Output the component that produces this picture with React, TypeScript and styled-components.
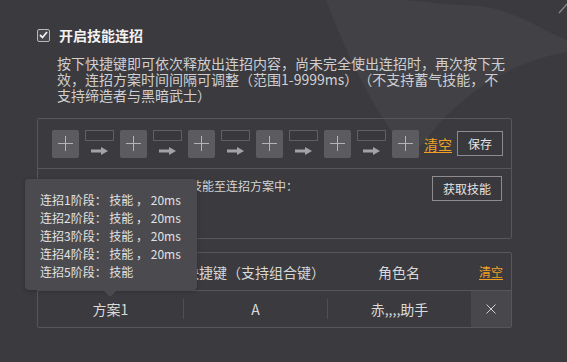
import styled, { createGlobalStyle } from "styled-components";

const GlobalStyle = createGlobalStyle`
  html, body {
    margin: 0;
    padding: 0;
    background: #3b3a3e;
  }
  * {
    box-sizing: border-box;
  }
`;

const STEPS = [1, 2, 3, 4, 5];
const TIPS = [
  "连招1阶段： 技能 ， 20ms",
  "连招2阶段： 技能 ， 20ms",
  "连招3阶段： 技能 ， 20ms",
  "连招4阶段： 技能 ， 20ms",
  "连招5阶段： 技能",
];

const PlusIcon = () => (
  <svg width="15" height="15" viewBox="0 0 15 15">
    <path d="M7.5 0 V15 M0 7.5 H15" stroke="#b4b3b7" strokeWidth="1" />
  </svg>
);

const ArrowIcon = () => (
  <svg width="17" height="8" viewBox="0 0 17 8">
    <path d="M0 2.5 H10 V0 L17 4 L10 8 V5.5 H0 Z" fill="#a3a2a6" />
  </svg>
);

const CloseIcon = () => (
  <svg width="10" height="10" viewBox="0 0 10 10">
    <path d="M0.5 0.5 L9.5 9.5 M9.5 0.5 L0.5 9.5" stroke="#d0d0d0" strokeWidth="1" />
  </svg>
);

const App = () => {
  return (
    <Page>
      <GlobalStyle />
      <Backdrop width="567" height="362" viewBox="0 0 567 362">
        <path
          d="M326 0 C345 50, 368 100, 398 140 C410 152, 420 150, 430 135 C460 95, 510 62, 567 52 L567 40 C540 30, 510 5, 465 5 C440 5, 420 0, 400 0 Z"
          fill="#424145"
        />
        <path d="M559 13 L567 4" stroke="#8a898d" strokeWidth="1.2" />
      </Backdrop>

      <CheckRow>
        <CheckBox>
          <svg width="9" height="8" viewBox="0 0 9 8">
            <path d="M1 4 L3.5 6.5 L8 1" stroke="#f0f0f0" strokeWidth="1.8" fill="none" />
          </svg>
        </CheckBox>
        <Title>开启技能连招</Title>
      </CheckRow>

      <Desc>
        按下快捷键即可依次释放出连招内容，尚未完全使出连招时，再次按下无
        <br />
        效，连招方案时间间隔可调整（范围1-9999ms）（不支持蓄气技能，不
        <br />
        支持缔造者与黑暗武士）
      </Desc>

      <ComboPanel>
        <SkillRow>
          <PlusBox>
            <PlusIcon />
          </PlusBox>
          {STEPS.map((n) => (
            <StepGroup key={n}>
              <Connector>
                <DelayInput />
                <ArrowWrap>
                  <ArrowIcon />
                </ArrowWrap>
              </Connector>
              <PlusBox>
                <PlusIcon />
              </PlusBox>
            </StepGroup>
          ))}
          <ClearLink $size={14}>清空</ClearLink>
          <GhostButton $width={46}>保存</GhostButton>
        </SkillRow>
        <FetchRow>
          <Hint>点击获取技能按钮，添加技能至连招方案中：</Hint>
          <GhostButton $width={70}>获取技能</GhostButton>
        </FetchRow>
      </ComboPanel>

      <TablePanel>
        <HeadRow>
          <HeadCell>方案名</HeadCell>
          <HeadCell>快捷键（支持组合键）</HeadCell>
          <HeadCell>角色名</HeadCell>
          <HeadCell>
            <ClearLink $size={12}>清空</ClearLink>
          </HeadCell>
        </HeadRow>
        <DataRow>
          <DataCell>方案1</DataCell>
          <Divider />
          <DataCell>A</DataCell>
          <Divider />
          <DataCell>赤,,,,助手</DataCell>
          <DeleteCell>
            <CloseIcon />
          </DeleteCell>
        </DataRow>
      </TablePanel>

      <Tooltip>
        {TIPS.map((t) => (
          <TipLine key={t}>{t}</TipLine>
        ))}
      </Tooltip>
    </Page>
  );
};

const Page = styled.div`
  position: relative;
  z-index: 0;
  width: 567px;
  height: 362px;
  overflow: hidden;
  padding: 27px 0 0 37px;
  background: #3b3a3e;
  font-family: "Noto Sans CJK SC", "Microsoft YaHei", "Noto Sans", sans-serif;
  text-spacing-trim: space-all;
  color: #d4d4d4;
`;

const Backdrop = styled.svg`
  position: absolute;
  left: 0;
  top: 0;
  z-index: -1;
`;

const CheckRow = styled.div`
  display: flex;
  align-items: center;
  height: 16px;
  gap: 9px;
`;

const CheckBox = styled.div`
  width: 13px;
  height: 13px;
  display: flex;
  align-items: center;
  justify-content: center;
  border: 1px solid #b8b8bb;
  border-radius: 2px;
  background: #48474c;
`;

const Title = styled.div`
  font-size: 14px;
  line-height: 16px;
  font-weight: bold;
  color: #f2f2f2;
`;

const Desc = styled.div`
  margin: 12px 0 0 20px;
  width: 470px;
  font-size: 14px;
  line-height: 16px;
  color: #cfcfd1;
`;

const ComboPanel = styled.div`
  margin-top: 15px;
  width: 475px;
  border: 1px solid #57565b;
  border-radius: 2px;
`;

const SkillRow = styled.div`
  height: 50px;
  display: flex;
  align-items: center;
  padding-left: 14px;
  border-bottom: 1px solid #57565b;
`;

const StepGroup = styled.div`
  display: flex;
  align-items: center;
`;

const PlusBox = styled.div`
  width: 27px;
  height: 28px;
  display: flex;
  align-items: center;
  justify-content: center;
  border-radius: 2px;
  background: #5c5b60;
`;

const Connector = styled.div`
  width: 29px;
  height: 28px;
  margin: 0 6px;
  display: flex;
  flex-direction: column;
  align-items: center;
`;

const DelayInput = styled.div`
  width: 29px;
  height: 11px;
  border: 1px solid #605f64;
  background: #39383c;
`;

const ArrowWrap = styled.div`
  margin-top: 6px;
  height: 8px;
  display: flex;
`;

const ClearLink = styled.span<{ $size: number }>`
  margin-left: 5px;
  font-size: ${(p) => p.$size}px;
  line-height: 16px;
  color: #f0a125;
  text-decoration: underline;
  text-underline-offset: 2px;
  cursor: pointer;
`;

const GhostButton = styled.div<{ $width: number }>`
  width: ${(p) => p.$width}px;
  height: 25px;
  margin-left: 5px;
  display: flex;
  align-items: center;
  justify-content: center;
  border: 1px solid #8d8c90;
  background: #39383c;
  font-size: 12px;
  color: #e4e4e4;
`;

const FetchRow = styled.div`
  height: 69px;
  display: flex;
  justify-content: space-between;
  align-items: flex-start;
  padding: 7px 9px 0 20px;
`;

const Hint = styled.div`
  font-size: 12px;
  line-height: 20px;
  color: #d4d4d4;
`;

const TablePanel = styled.div`
  margin-top: 13px;
  width: 475px;
  border: 1px solid #57565b;
  border-radius: 2px;
`;

const HeadRow = styled.div`
  display: grid;
  grid-template-columns: 145px 144px 144px 40px;
  height: 38px;
  border-bottom: 1px solid #57565b;
`;

const HeadCell = styled.div`
  display: flex;
  align-items: center;
  justify-content: center;
  font-size: 14px;
  color: #d8d8d8;

  & > span {
    margin-left: 0;
  }
`;

const DataRow = styled.div`
  display: grid;
  grid-template-columns: 145px 1px 143px 1px 143px 40px;
  height: 36px;
`;

const DataCell = styled.div`
  display: flex;
  align-items: center;
  justify-content: center;
  font-size: 14px;
  color: #dadada;
`;

const Divider = styled.div`
  align-self: center;
  height: 20px;
  background: #505054;
`;

const DeleteCell = styled.div`
  display: flex;
  align-items: center;
  justify-content: center;
  background: #48474c;
`;

const Tooltip = styled.div`
  position: absolute;
  left: 25px;
  top: 179px;
  width: 172px;
  height: 111px;
  padding: 12px 0 0 15px;
  border-radius: 4px;
  background: #4b4a4f;
  box-shadow: 0 1px 4px rgba(0, 0, 0, 0.25);

  &::after {
    content: "";
    position: absolute;
    left: 78px;
    bottom: -7px;
    border-left: 7px solid transparent;
    border-right: 7px solid transparent;
    border-top: 7px solid #4b4a4f;
  }
`;

const TipLine = styled.div`
  font-size: 12px;
  line-height: 18px;
  white-space: pre;
  color: #e2e2e2;
`;

export default App;
